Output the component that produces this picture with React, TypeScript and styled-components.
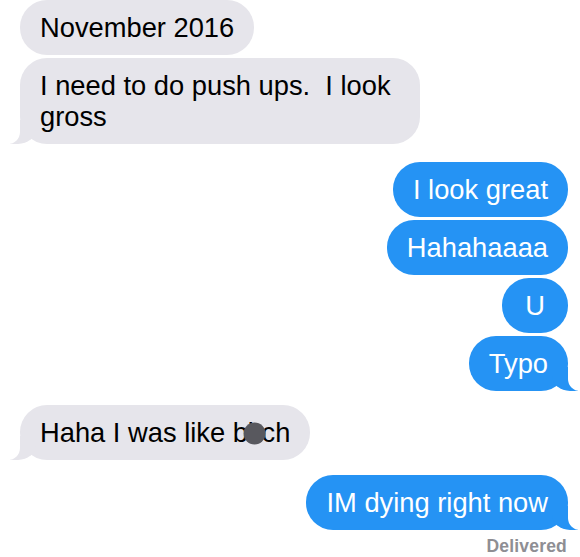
import React from "react";
import styled, { createGlobalStyle, css } from "styled-components";

const GlobalStyle = createGlobalStyle`
  html, body {
    margin: 0;
    padding: 0;
    background: #ffffff;
  }
  body {
    font-family: "Liberation Sans", Arial, sans-serif;
    -webkit-font-smoothing: antialiased;
  }
`;

const GRAY = "#e6e5eb";
const BLUE = "#2593f4";

type Side = "left" | "right";

interface SideProps {
  $side: Side;
}

interface BubbleProps extends SideProps {
  $tail?: boolean;
}

const Thread = styled.div`
  width: 580px;
  height: 557px;
  overflow: hidden;
  display: flex;
  flex-direction: column;
  padding: 0 12px 0 20px;
  box-sizing: border-box;
`;

const Group = styled.div<SideProps & { $top: number }>`
  display: flex;
  flex-direction: column;
  align-items: ${({ $side }) => ($side === "left" ? "flex-start" : "flex-end")};
  gap: 3px;
  margin-top: ${({ $top }) => $top}px;
`;

const tailLeft = css`
  &::before {
    content: "";
    position: absolute;
    bottom: 0;
    left: -10px;
    width: 26px;
    height: 24px;
    background: ${GRAY};
    border-bottom-right-radius: 18px 15px;
  }
  &::after {
    content: "";
    position: absolute;
    bottom: 0;
    left: -13px;
    width: 13px;
    height: 24px;
    background: #ffffff;
    border-bottom-right-radius: 12px;
  }
`;

const tailRight = css`
  &::before {
    content: "";
    position: absolute;
    bottom: 0;
    right: -10px;
    width: 26px;
    height: 24px;
    background: ${BLUE};
    border-bottom-left-radius: 18px 15px;
  }
  &::after {
    content: "";
    position: absolute;
    bottom: 0;
    right: -13px;
    width: 13px;
    height: 24px;
    background: #ffffff;
    border-bottom-left-radius: 12px;
  }
`;

const Bubble = styled.div<BubbleProps>`
  position: relative;
  box-sizing: border-box;
  max-width: 400px;
  min-width: 66px;
  padding: 12px 20px;
  border-radius: 27px;
  font-size: 27.3px;
  line-height: 31px;
  white-space: pre-wrap;
  text-align: center;
  background: ${({ $side }) => ($side === "left" ? GRAY : BLUE)};
  color: ${({ $side }) => ($side === "left" ? "#000000" : "#ffffff")};
  ${({ $tail, $side }) => ($tail ? ($side === "left" ? tailLeft : tailRight) : "")}
`;

const Lines = styled.span`
  display: inline-block;
  text-align: left;
`;

const Censored = styled.span`
  position: relative;

  &::after {
    content: "";
    position: absolute;
    left: 50%;
    top: 50%;
    width: 22px;
    height: 22px;
    border-radius: 50%;
    background: #58585e;
    transform: translate(-52%, -48%);
  }
`;

const Status = styled.div`
  align-self: flex-end;
  margin-top: 6px;
  margin-right: 1px;
  font-size: 17.5px;
  line-height: 20px;
  font-weight: 600;
  letter-spacing: 0.2px;
  color: #8e8e93;
`;

interface Message {
  text: React.ReactNode;
  tail?: boolean;
}

interface GroupData {
  side: Side;
  top: number;
  messages: Message[];
}

const groups: GroupData[] = [
  {
    side: "left",
    top: 0,
    messages: [
      { text: "November 2016" },
      { text: "I need to do push ups.  I look gross", tail: true },
    ],
  },
  {
    side: "right",
    top: 18,
    messages: [
      { text: "I look great" },
      { text: "Hahahaaaa" },
      { text: "U" },
      { text: "Typo", tail: true },
    ],
  },
  {
    side: "left",
    top: 14,
    messages: [
      {
        text: (
          <>
            Haha I was like b<Censored>it</Censored>ch
          </>
        ),
        tail: true,
      },
    ],
  },
  {
    side: "right",
    top: 15,
    messages: [{ text: "IM dying right now", tail: true }],
  },
];

export default function App() {
  return (
    <>
      <GlobalStyle />
      <Thread>
        {groups.map((group, gi) => (
          <Group key={gi} $side={group.side} $top={group.top}>
            {group.messages.map((msg, mi) => (
              <Bubble key={mi} $side={group.side} $tail={msg.tail}>
                <Lines>{msg.text}</Lines>
              </Bubble>
            ))}
          </Group>
        ))}
        <Status>Delivered</Status>
      </Thread>
    </>
  );
}
